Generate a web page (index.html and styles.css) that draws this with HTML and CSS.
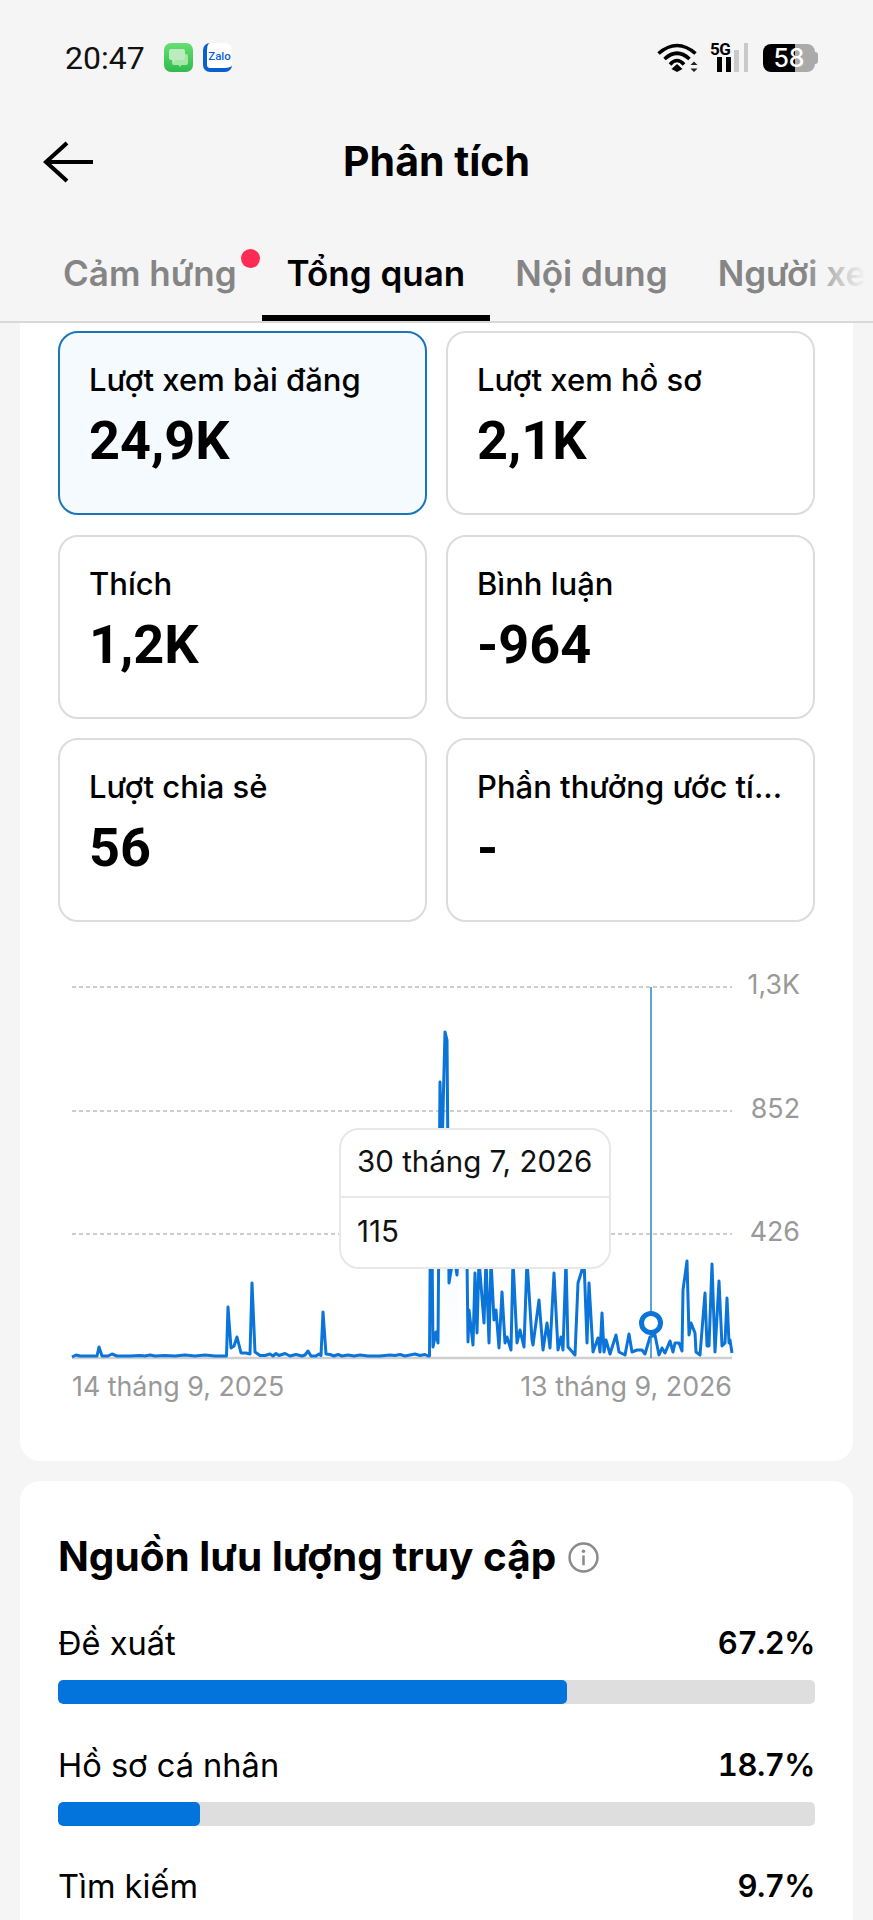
FILE: index.html
```html
<!DOCTYPE html>
<html lang="vi">

<head>
  <meta charset="UTF-8">
  <meta name="viewport" content="width=device-width, initial-scale=1.0">
  <title>Phân tích</title>
  <link rel="stylesheet" href="styles.css">
</head>

<body>
  <div class="status-bar">
    <div class="status-left">
      <span class="clock">20:47</span>
      <svg class="app-icon" viewBox="0 0 29 29">
        <defs>
          <linearGradient id="msgGreen" x1="0" y1="0" x2="0" y2="1">
            <stop offset="0" stop-color="#66df72" />
            <stop offset="1" stop-color="#2fbb4c" />
          </linearGradient>
        </defs>
        <rect width="29" height="29" rx="7" fill="url(#msgGreen)" />
        <path d="M10 11h12a2 2 0 0 1 2 2v7a2 2 0 0 1-2 2h-4l-3 2v-2h-5a2 2 0 0 1-2-2v-7a2 2 0 0 1 2-2z" fill="#a5e6a9" />
        <path d="M7 6h12a2 2 0 0 1 2 2v7a2 2 0 0 1-2 2h-7l-3 2.500v-2.500h-2a2 2 0 0 1-2-2v-7a2 2 0 0 1 2-2z" fill="#bcecbd" />
      </svg>
      <div class="zalo-icon"><span>Zalo</span></div>
    </div>
    <div class="status-right">
      <svg class="wifi-icon" viewBox="0 0 42 29">
        <path d="M1.500 10.500Q20-5.500 38.500 10.500M7.500 16Q20 4.500 32.500 16M13 21.500Q20 13.500 27 21.500" fill="none" stroke="#000" stroke-width="3.600" />
        <path d="M20 21l5.500 5-5.500 3-5.500-3z" fill="#000" />
        <path d="M37 18.500l3.500 3.500h-7zM37 29l-3.500-3.500h7z" fill="#222" />
      </svg>
      <div class="signal">
        <span class="signal-label">5G</span>
        <svg class="signal-bars" viewBox="0 0 32 29">
          <rect x="0" y="14" width="5" height="15" fill="#000" />
          <rect x="9" y="14" width="5" height="15" fill="#000" />
          <rect x="17" y="7" width="5" height="22" fill="#c9c9c9" />
          <rect x="27" y="0" width="4" height="29" fill="#c9c9c9" />
        </svg>
      </div>
      <div class="battery"><span>58</span></div>
    </div>
  </div>

  <div class="nav-bar">
    <svg class="back-icon" viewBox="0 0 50 42">
      <path d="M50 21H4M24 2L3 21l21 19" fill="none" stroke="#000" stroke-width="4.200" />
    </svg>
    <h1>Phân tích</h1>
  </div>

  <div class="tabs">
    <div class="tab">Cảm hứng<i class="tab-dot"></i></div>
    <div class="tab active">Tổng quan</div>
    <div class="tab">Nội dung</div>
    <div class="tab">Người xem</div>
  </div>

  <div class="card overview">
    <div class="stat-grid">
      <div class="stat selected">
        <div class="stat-label">Lượt xem bài đăng</div>
        <div class="stat-value">24,9K</div>
      </div>
      <div class="stat">
        <div class="stat-label">Lượt xem hồ sơ</div>
        <div class="stat-value">2,1K</div>
      </div>
      <div class="stat">
        <div class="stat-label">Thích</div>
        <div class="stat-value">1,2K</div>
      </div>
      <div class="stat">
        <div class="stat-label">Bình luận</div>
        <div class="stat-value">-964</div>
      </div>
      <div class="stat">
        <div class="stat-label">Lượt chia sẻ</div>
        <div class="stat-value">56</div>
      </div>
      <div class="stat">
        <div class="stat-label">Phần thưởng ước tí...</div>
        <div class="stat-value">-</div>
      </div>
    </div>

    <div class="chart">
      <!-- viewBox uses page coordinates so the points are easy to read off -->
      <svg class="chart-svg" viewBox="20 960 833 460">
        <defs>
          <linearGradient id="areaFill" gradientUnits="userSpaceOnUse" x1="0" y1="1030" x2="0" y2="1358">
            <stop offset="0" stop-color="#0274dc" stop-opacity="0.1" />
            <stop offset="1" stop-color="#0274dc" stop-opacity="0" />
          </linearGradient>
        </defs>
        <g class="grid-lines">
          <line x1="72" y1="987" x2="732" y2="987" />
          <line x1="72" y1="1111" x2="732" y2="1111" />
          <line x1="72" y1="1234" x2="732" y2="1234" />
        </g>
        <line class="axis" x1="72" y1="1358" x2="732" y2="1358" />
        <text class="tick" x="800" y="994" text-anchor="end">1,3K</text>
        <text class="tick" x="800" y="1118" text-anchor="end">852</text>
        <text class="tick" x="800" y="1241" text-anchor="end">426</text>
        <text class="tick" x="72" y="1396">14 tháng 9, 2025</text>
        <text class="tick" x="732" y="1396" text-anchor="end">13 tháng 9, 2026</text>
        <path class="area" d="M429 1357L431 1150 433 1347 436 1332 438 1343 440 1082 442 1150 445 1032 447 1040 449 1283 452 1265 455 1262 457 1275 460 1358 Z" />
        <path class="series" d="M72 1357L76 1355 80 1356 90 1356 97 1356 99 1347 102 1356 108 1356 112 1354 117 1356 130 1356 140 1355.500 145 1356 150 1355 155 1356 165 1355.500 175 1356 185 1355 195 1356 205 1355 215 1356 225 1356 226.500 1356 228 1307 231 1348 234 1346 237 1337 241 1353 246 1353 250 1354 252 1283 255 1352 260 1355.500 265 1355.500 270 1354 273 1356 276 1353.500 279 1355.500 285 1353.500 290 1356 296 1354.500 302 1356 305 1355 308 1351 311 1356 316 1356 319 1354 321 1355.500 323 1312 326 1354 330 1354.500 334 1356 338 1354.500 342 1356 348 1355 354 1356 360 1355 368 1356 380 1356 390 1355 395 1355.500 400 1354.500 405 1356 415 1354 420 1355.500 425 1354.500 428 1356 429.500 1356 431 1150 433 1347 436 1332 438 1343 440 1082 442 1150 445 1032 447 1040 449 1283 452 1265 455 1262 457 1275 461 1200 464 1200 467 1260 468 1342 469 1310 473 1345 475 1273 477 1333 479 1260 484 1323 486 1260 489 1343 491 1260 494 1320 496 1310 499 1348 502 1292 505 1343 507 1337 511 1350 513 1260 517 1343 520 1330 524 1347 527 1260 532 1340 533 1345 539 1300 543 1350 547 1323 550 1348 554 1273 558 1350 561 1337 563 1350 566 1260 568 1347 575 1355 578 1283 582 1270 584 1260 587 1343 589 1283 593 1352 598 1338 600 1352 602 1313 604 1352 606 1340 610 1354 616 1335 619 1352 625 1355 629 1334 632 1352 637 1350 642 1350 645 1354 650 1337 655 1335 659 1355 662 1348 665 1353 670 1341 673 1352 675 1343 679 1343 682 1351 683 1290 687 1261 689 1335 691 1323 695 1333 696 1352 700 1355 705 1293 707 1346 709 1346 712 1264 715 1352 719 1281 722 1346 725 1343 727 1298 729 1343 730 1340 732 1353" />
        <line class="marker-line" x1="651" y1="987" x2="651" y2="1358" />
        <circle class="marker" cx="651" cy="1323" r="9.500" />
      </svg>
      <div class="tooltip">
        <div class="tooltip-date">30 tháng 7, 2026</div>
        <div class="tooltip-value">115</div>
      </div>
    </div>
  </div>

  <div class="card traffic">
    <h2>Nguồn lưu lượng truy cập
      <svg class="info-icon" viewBox="0 0 30 30">
        <circle cx="15" cy="15" r="13.500" fill="none" stroke="#8a8a8a" stroke-width="2.400" />
        <rect x="13.800" y="13" width="2.400" height="9.500" fill="#8a8a8a" />
        <circle cx="15" cy="9" r="1.700" fill="#8a8a8a" />
      </svg>
    </h2>
    <div class="source">
      <div class="source-row"><span>Đề xuất</span><b>67.2%</b></div>
      <div class="bar"><div class="bar-fill" style="width: 67.2%"></div></div>
    </div>
    <div class="source">
      <div class="source-row"><span>Hồ sơ cá nhân</span><b>18.7%</b></div>
      <div class="bar"><div class="bar-fill" style="width: 18.7%"></div></div>
    </div>
    <div class="source">
      <div class="source-row"><span>Tìm kiếm</span><b>9.7%</b></div>
      <div class="bar"><div class="bar-fill" style="width: 9.7%"></div></div>
    </div>
  </div>
</body>

</html>
```

FILE: styles.css
```css
* {
  box-sizing: border-box;
  margin: 0;
  padding: 0;
  font-family: 'Inter', 'Roboto', sans-serif;
}

html,
body {
  height: 1920px;
  overflow: hidden;
}

body {
  background: #f5f5f5;
  color: #000;
}

.status-bar {
  height: 115px;
  padding: 43px 56px 0 65px;
  display: flex;
  justify-content: space-between;
  align-items: flex-start;
}

.status-left {
  display: flex;
  align-items: center;
  height: 29px;
}

.clock {
  font-family: 'Roboto', sans-serif;
  font-size: 32px;
  font-weight: 400;
  color: #111;
  width: 99px;
}

.app-icon {
  width: 29px;
  height: 29px;
}

.zalo-icon {
  width: 29px;
  height: 29px;
  margin-left: 10px;
  background: #fff;
  border-radius: 7px;
  border-left: 4px solid #0a5fd0;
  border-bottom: 4px solid #0a5fd0;
  display: flex;
  align-items: center;
  justify-content: center;
  overflow: hidden;
}

.zalo-icon span {
  font-family: 'Roboto', sans-serif;
  font-size: 11.5px;
  font-weight: 500;
  color: #0a5fd0;
}

.status-right {
  display: flex;
  align-items: flex-start;
}

.wifi-icon {
  width: 42px;
  height: 29px;
}

.signal {
  position: relative;
  width: 32px;
  height: 29px;
  margin-left: 18px;
}

.signal-label {
  position: absolute;
  left: -7px;
  top: -2px;
  font-family: 'Roboto', sans-serif;
  font-size: 17px;
  line-height: 17px;
  font-weight: 700;
  letter-spacing: -0.5px;
}

.signal-bars {
  width: 32px;
  height: 29px;
  display: block;
}

.battery {
  position: relative;
  width: 52px;
  height: 28px;
  margin-left: 14px;
  margin-top: 1px;
  margin-right: 2px;
  border-radius: 8px;
  background: linear-gradient(90deg, #000 61%, #aaa 61%);
  color: #fff;
  font-family: 'Roboto', sans-serif;
  font-size: 25px;
  font-weight: 500;
  line-height: 28px;
  text-align: center;
}

.battery::after {
  content: '';
  position: absolute;
  right: -3px;
  top: 8px;
  width: 3px;
  height: 12px;
  border-radius: 0 3px 3px 0;
  background: #aaa;
}

.nav-bar {
  position: relative;
  height: 94px;
  padding-bottom: 2px;
  display: flex;
  align-items: center;
  justify-content: center;
}

.nav-bar h1 {
  font-size: 41px;
  font-weight: 700;
}

.back-icon {
  position: absolute;
  left: 43px;
  top: 26px;
  width: 50px;
  height: 42px;
}

.tabs {
  position: relative;
  height: 114px;
  padding: 0 0 0 38px;
  display: flex;
  white-space: nowrap;
  overflow: hidden;
  border-bottom: 2px solid #d8d8d8;
}

.tabs::after {
  content: '';
  position: absolute;
  right: 0;
  top: 0;
  width: 70px;
  height: 100%;
  background: linear-gradient(90deg, rgba(245, 245, 245, 0), #f5f5f5 90%);
}

.tab {
  position: relative;
  flex: none;
  padding: 42px 25px 0;
  font-size: 35px;
  line-height: 44px;
  font-weight: 600;
  color: #858585;
}

.tab.active {
  color: #000;
  border-bottom: 6px solid #000;
}

.tab-dot {
  position: absolute;
  right: 2px;
  top: 40px;
  width: 19px;
  height: 19px;
  border-radius: 50%;
  background: #fe2c55;
}

.card {
  background: #fff;
  width: 833px;
  margin: 0 20px;
  padding: 0 38px;
  border-radius: 20px;
}

.overview {
  padding-top: 8px;
  padding-bottom: 41px;
  border-radius: 0 0 20px 20px;
}

.stat-grid {
  display: grid;
  grid-template-columns: 1fr 1fr;
  grid-auto-rows: 184px;
  gap: 19.5px 19px;
}

.stat {
  border: 2px solid #dcdcdc;
  border-radius: 20px;
  padding: 28px 29px 0;
}

.stat.selected {
  background: #f5faff;
  border-color: #1a76b8;
}

.stat-label {
  font-size: 31px;
  line-height: 38px;
  font-weight: 500;
  white-space: nowrap;
}

.stat-value {
  font-family: 'Roboto', sans-serif;
  font-size: 54px;
  line-height: 62px;
  font-weight: 700;
  margin-top: 11px;
}

.chart {
  position: relative;
  height: 460px;
  margin: 38px -38px 0;
}

.chart-svg {
  width: 833px;
  height: 460px;
  display: block;
}

.grid-lines line {
  stroke: #bdbdbd;
  stroke-width: 1.500;
  stroke-dasharray: 4 3;
}

.axis {
  stroke: #cfcfcf;
  stroke-width: 2.500;
}

.tick {
  font-size: 26.8px;
  fill: #999;
}

.area {
  fill: url(#areaFill);
}

.series {
  fill: none;
  stroke: #0b74d8;
  stroke-width: 3;
  stroke-linejoin: round;
}

.marker-line {
  stroke: #2a85c9;
  stroke-width: 1.500;
}

.marker {
  fill: #fff;
  stroke: #0b74d8;
  stroke-width: 5;
}

.tooltip {
  position: absolute;
  left: 319px;
  top: 168px;
  width: 272px;
  height: 141px;
  background: #fff;
  border: 2px solid #e8e8e8;
  border-radius: 20px;
  font-size: 29.5px;
  color: #111;
}

.tooltip-date {
  height: 68px;
  padding: 0 16px;
  line-height: 62px;
  border-bottom: 2px solid #e8e8e8;
}

.tooltip-value {
  padding: 0 16px;
  line-height: 66px;
}

.traffic {
  margin-top: 20px;
  padding-top: 51px;
}

.traffic h2 {
  font-size: 40.5px;
  line-height: 50px;
  font-weight: 700;
  margin-bottom: 40px;
  display: flex;
  align-items: center;
  white-space: nowrap;
}

.info-icon {
  width: 31px;
  height: 31px;
  margin-left: 12px;
}

.source {
  margin-bottom: 39.5px;
}

.source-row {
  display: flex;
  justify-content: space-between;
  font-size: 32.6px;
  line-height: 42px;
  margin-bottom: 16px;
}

.source-row b {
  font-size: 31px;
  font-weight: 600;
  font-variant-numeric: tabular-nums;
  letter-spacing: -0.5px;
}

.bar {
  height: 24px;
  border-radius: 5px;
  background: #dedede;
  overflow: hidden;
}

.bar-fill {
  height: 100%;
  border-radius: 5px;
  background: #0274dc;
}
```
